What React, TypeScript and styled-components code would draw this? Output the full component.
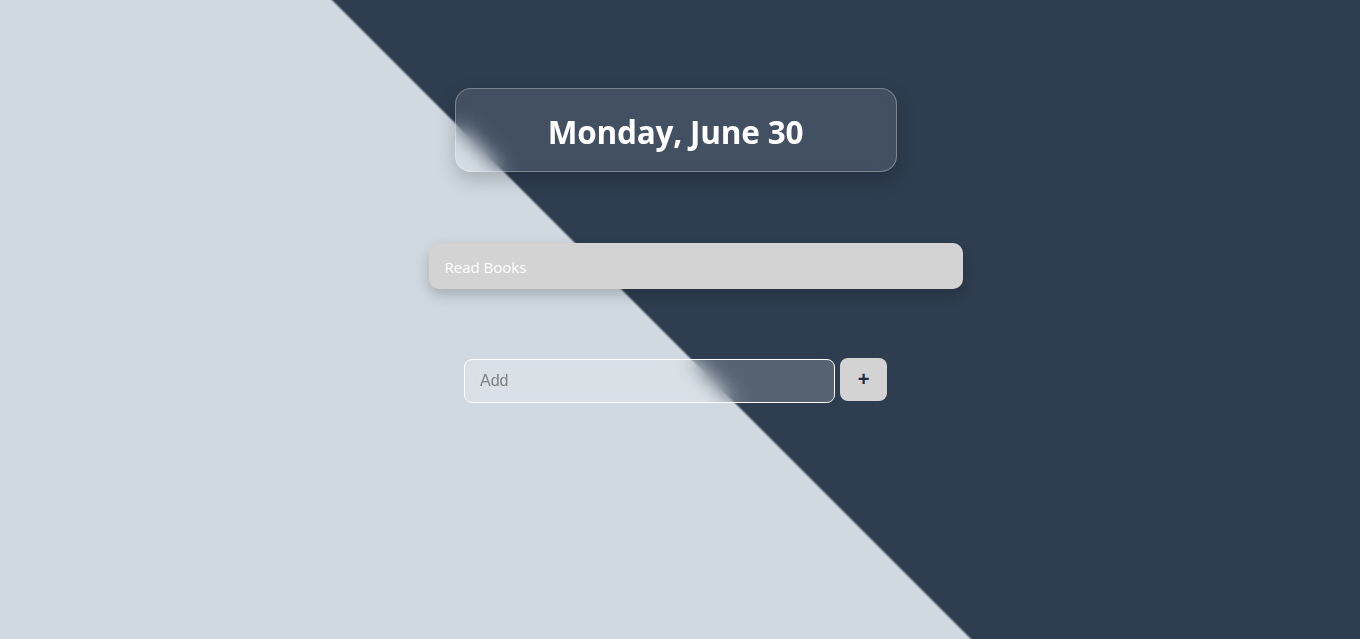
import React, { useState } from "react";
import styled, { createGlobalStyle } from "styled-components";

const GlobalStyle = createGlobalStyle`
  html, body {
    margin: 0;
    padding: 0;
  }
  body {
    font-family: "Open Sans", "Noto Sans", sans-serif;
  }
`;

const Page = styled.div`
  min-height: 696px;
  box-sizing: border-box;
  padding: 88px 9px 0 0;
  display: flex;
  flex-direction: column;
  align-items: center;
  background: linear-gradient(45deg, #d0d9e1 49.9%, #2e3d50 50.1%);
`;

const DateCard = styled.div`
  width: 442px;
  height: 84px;
  box-sizing: border-box;
  display: flex;
  align-items: center;
  justify-content: center;
  border-radius: 16px;
  background: rgba(255, 255, 255, 0.1);
  border: 1px solid rgba(255, 255, 255, 0.3);
  backdrop-filter: blur(10px);
  box-shadow: 0 8px 20px rgba(0, 0, 0, 0.2);
`;

const Title = styled.h1`
  margin: 2px 0 0;
  color: #ffffff;
  font-size: 31.5px;
  font-weight: 700;
  letter-spacing: -0.2px;
`;

const List = styled.ul`
  width: 574px;
  box-sizing: border-box;
  margin: 71px 0 0;
  padding: 0 0 0 40px;
  list-style: none;
`;

const Item = styled.li`
  height: 46px;
  box-sizing: border-box;
  display: flex;
  align-items: center;
  padding: 1px 16px 0;
  border-radius: 10px;
  background: #d3d3d3;
  color: #ffffff;
  font-size: 15px;
  box-shadow: 0 6px 14px rgba(0, 0, 0, 0.2);
`;

const Form = styled.form`
  display: flex;
  align-items: flex-start;
  gap: 5px;
  margin-top: 70px;
`;

const Input = styled.input`
  width: 371px;
  height: 44px;
  box-sizing: border-box;
  padding: 0 15px;
  border: 1px solid #ffffff;
  border-radius: 8px;
  background: rgba(255, 255, 255, 0.2);
  backdrop-filter: blur(10px);
  font-family: "Liberation Sans", Arial, sans-serif;
  font-size: 16px;
  color: #333;
  outline: none;

  &::placeholder {
    color: #7d7f82;
  }
`;

const AddButton = styled.button`
  width: 47px;
  height: 43px;
  margin-top: -1px;
  border: none;
  border-radius: 8px;
  background: #d3d3d3;
  color: #1f2d40;
  font-family: "Liberation Sans", Arial, sans-serif;
  font-size: 20px;
  font-weight: 700;
  cursor: pointer;
`;

export default function App() {
  const [tasks, setTasks] = useState<string[]>(["Read Books"]);
  const [text, setText] = useState("");

  return (
    <Page>
      <GlobalStyle />
      <DateCard>
        <Title>Monday, June 30</Title>
      </DateCard>
      <List>
        {tasks.map((t, i) => (
          <Item key={i}>{t}</Item>
        ))}
      </List>
      <Form
        onSubmit={(e) => {
          e.preventDefault();
          if (text.trim()) setTasks([...tasks, text.trim()]);
          setText("");
        }}
      >
        <Input
          placeholder="Add"
          value={text}
          onChange={(e) => setText(e.target.value)}
        />
        <AddButton type="submit">+</AddButton>
      </Form>
    </Page>
  );
}
